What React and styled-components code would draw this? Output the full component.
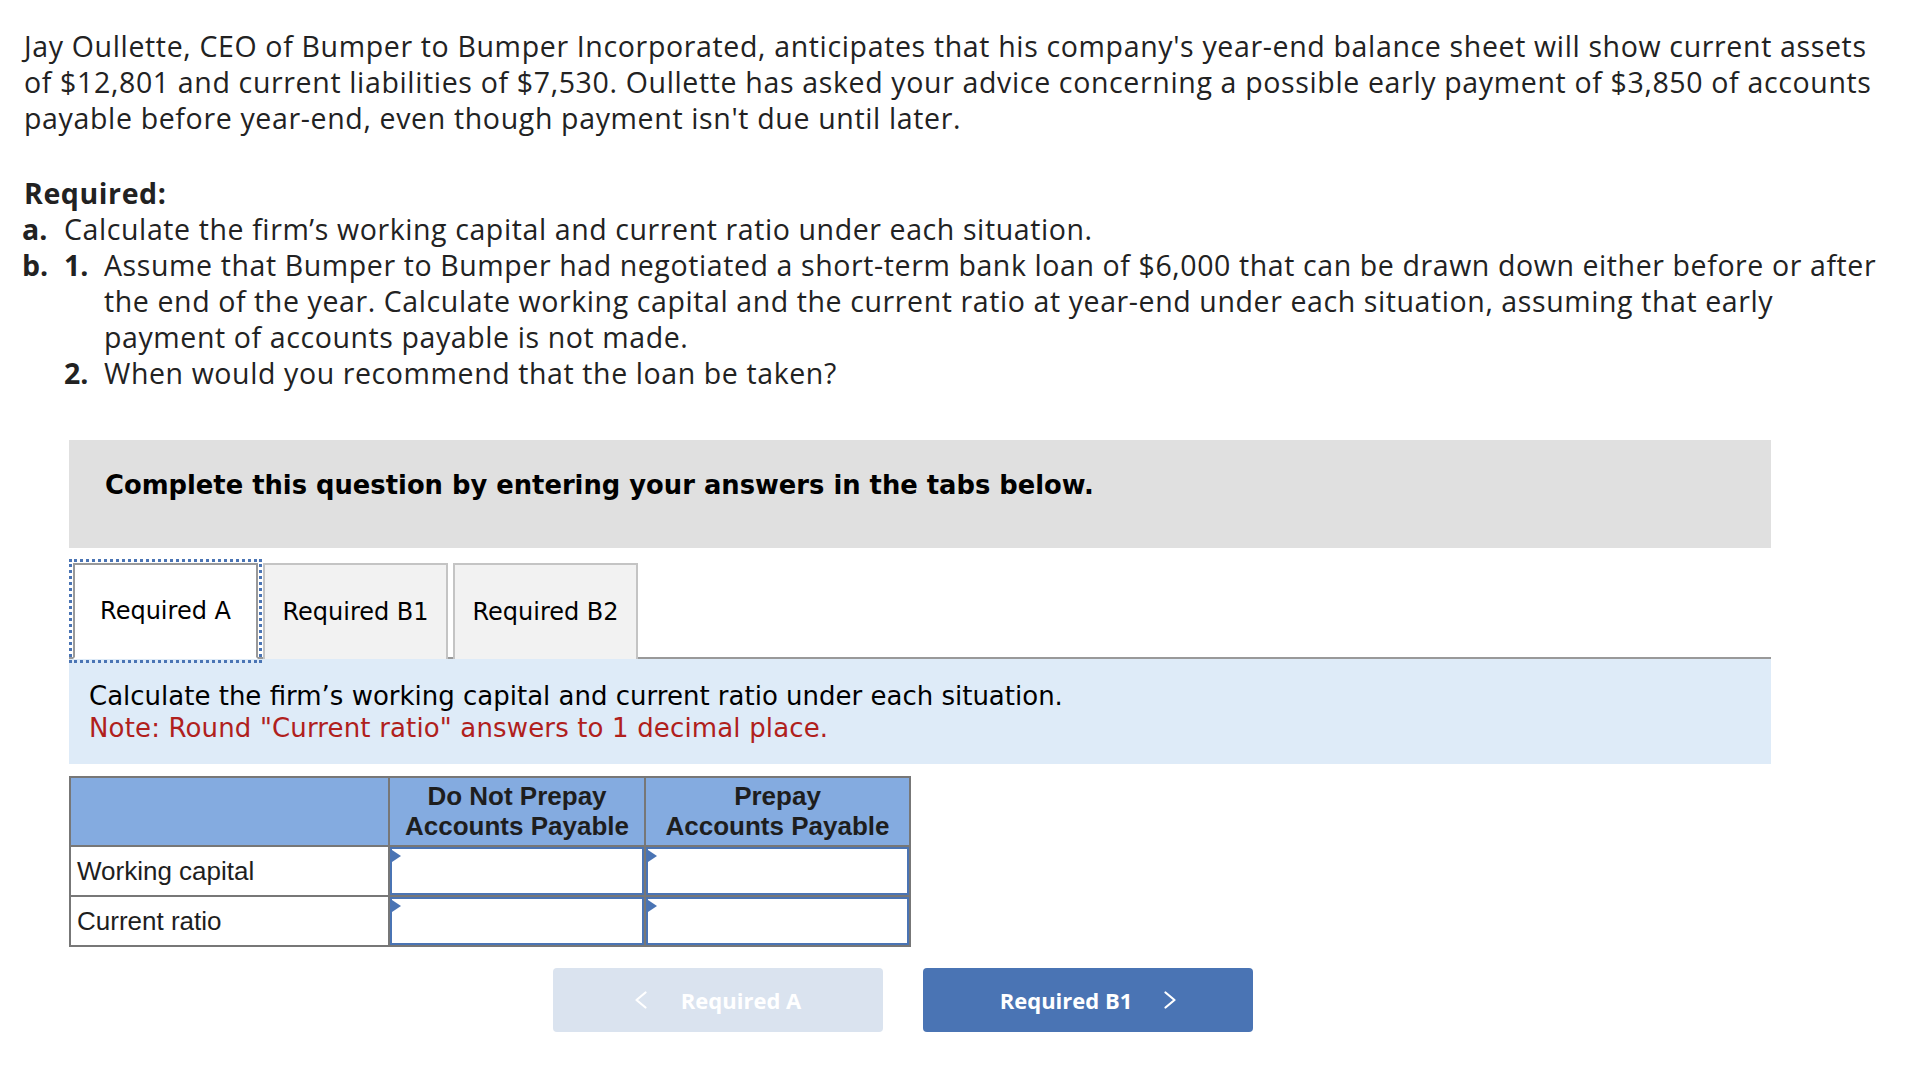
import React from "react";
import styled, { createGlobalStyle } from "styled-components";

const GlobalStyle = createGlobalStyle`
  body {
    margin: 0;
    background: #ffffff;
  }
`;

const situations = ["Do Not Prepay", "Prepay"];
const rows = ["Working capital", "Current ratio"];
const tabs = ["Required A", "Required B1", "Required B2"];

const Chevron = ({ dir }) => (
  <svg width="12" height="18" viewBox="0 0 12 18" fill="none">
    <polyline
      points={dir === "left" ? "10.5,1.5 1.5,9 10.5,16.5" : "1.5,1.5 10.5,9 1.5,16.5"}
      stroke="#ffffff"
      strokeWidth="2.2"
      strokeLinecap="round"
      strokeLinejoin="round"
    />
  </svg>
);

const App = () => {
  return (
    <Page>
      <GlobalStyle />
      <Question>
        Jay Oullette, CEO of Bumper to Bumper Incorporated, anticipates that
        his company's year-end balance sheet will show current assets of
        $12,801 and current liabilities of $7,530. Oullette has asked your
        advice concerning a possible early payment of $3,850 of accounts
        payable before year-end, even though payment isn't due until later.
      </Question>

      <Required>
        <h3>Required:</h3>
        <Item>
          <Label>a.</Label>
          <span>
            Calculate the firm’s working capital and current ratio under each
            situation.
          </span>
        </Item>
        <Item>
          <Label>b.</Label>
          <div>
            <SubItem>
              <Label sub>1.</Label>
              <span>
                Assume that Bumper to Bumper had negotiated a short-term bank
                loan of $6,000 that can be drawn down either before or after
                the end of the year. Calculate working capital and the current
                ratio at year-end under each situation, assuming that early
                payment of accounts payable is not made.
              </span>
            </SubItem>
            <SubItem>
              <Label sub>2.</Label>
              <span>When would you recommend that the loan be taken?</span>
            </SubItem>
          </div>
        </Item>
      </Required>

      <Assignment>
        <Instructions>
          <h4>Complete this question by entering your answers in the tabs below.</h4>
        </Instructions>

        <TabStrip>
          {tabs.map((t, i) => (
            <Tab key={t} active={i === 0}>
              {t}
            </Tab>
          ))}
        </TabStrip>

        <TabPanel>
          <p>
            Calculate the firm’s working capital and current ratio under each
            situation.
          </p>
          <Note>Note: Round "Current ratio" answers to 1 decimal place.</Note>
        </TabPanel>

        <AnswerTable>
          <colgroup>
            <col style={{ width: 319 }} />
            <col style={{ width: 256 }} />
            <col style={{ width: 265 }} />
          </colgroup>
          <thead>
            <tr>
              <th />
              {situations.map((s) => (
                <th key={s}>
                  {s}
                  <br />
                  Accounts Payable
                </th>
              ))}
            </tr>
          </thead>
          <tbody>
            {rows.map((r) => (
              <tr key={r}>
                <RowLabel>{r}</RowLabel>
                {situations.map((s) => (
                  <AnswerCell key={s}>
                    <AnswerBox>
                      <input type="text" aria-label={`${r} ${s}`} />
                    </AnswerBox>
                  </AnswerCell>
                ))}
              </tr>
            ))}
          </tbody>
        </AnswerTable>

        <Nav>
          <NavButton disabled>
            <Chevron dir="left" />
            <span>Required A</span>
          </NavButton>
          <NavButton primary>
            <span>Required B1</span>
            <Chevron dir="right" />
          </NavButton>
        </Nav>
      </Assignment>
    </Page>
  );
};

export default App;

const Page = styled.div`
  padding: 28px 34px 40px 24px;
  font-family: "Open Sans", "Lato", sans-serif;
  color: #222222;
`;

const Question = styled.p`
  margin: 0;
  font-size: 28.5px;
  letter-spacing: 0.65px;
  line-height: 36px;
`;

const Required = styled.div`
  margin-top: 39px;
  font-size: 28.5px;
  letter-spacing: 0.6px;
  line-height: 36px;
  h3 {
    margin: 0;
    font-size: 28.5px;
    font-weight: 700;
  }
`;

const Item = styled.div`
  display: grid;
  grid-template-columns: 40px 1fr;
`;

const SubItem = styled.div`
  display: grid;
  grid-template-columns: 40px 1fr;
`;

const Label = styled.span`
  font-weight: 700;
  letter-spacing: 0;
  text-align: ${(p) => (p.sub ? "right" : "left")};
  padding-right: ${(p) => (p.sub ? "16px" : "0")};
  margin-left: ${(p) => (p.sub ? "0" : "-2px")};
`;

const Assignment = styled.div`
  margin: 49px 115px 0 45px;
  font-family: "DejaVu Sans", Verdana, sans-serif;
`;

const Instructions = styled.div`
  background: #e0e0e0;
  padding: 30px 36px 48px;
  h4 {
    margin: 0;
    font-size: 25.8px;
    line-height: 30px;
    font-weight: 700;
    color: #000000;
  }
`;

const TabStrip = styled.div`
  display: flex;
  gap: 5px;
  margin-top: 15px;
  padding-left: 4px;
  border-bottom: 2px solid #999999;
`;

const Tab = styled.button`
  width: 185px;
  height: 96px;
  margin-bottom: -2px;
  border: 2px solid ${(p) => (p.active ? "#999999" : "#c4c4c4")};
  border-bottom: ${(p) => (p.active ? "2px solid #ffffff" : "none")};
  background: ${(p) => (p.active ? "#ffffff" : "#f2f2f2")};
  outline: ${(p) => (p.active ? "3px dotted #4a74b4" : "none")};
  outline-offset: 1px;
  font-family: "DejaVu Sans", Verdana, sans-serif;
  font-size: 24px;
  color: #000000;
  text-align: center;
  padding: 0;
  cursor: pointer;
`;

const TabPanel = styled.div`
  background: #deebf8;
  padding: 21px 20px 20px;
  font-size: 26px;
  line-height: 32px;
  color: #000000;
  p {
    margin: 0;
  }
`;

const Note = styled.p`
  color: #b0201c;
  letter-spacing: 0.15px;
`;

const AnswerTable = styled.table`
  margin-top: 12px;
  border-collapse: collapse;
  border: 2px solid #777777;
  width: 840px;
  table-layout: fixed;
  font-family: "Liberation Sans", Arial, sans-serif;
  font-size: 26px;
  color: #1e1e1e;
  th {
    background: #84abe0;
    border: 2px solid #777777;
    font-weight: 700;
    line-height: 30px;
    padding: 3px 0 4px;
    text-align: center;
  }
`;

const RowLabel = styled.td`
  border: 2px solid #777777;
  height: 48px;
  padding: 0 6px;
  line-height: 30px;
`;

const AnswerCell = styled.td`
  border: 2px solid #777777;
  padding: 0;
  height: 48px;
`;

const AnswerBox = styled.div`
  position: relative;
  height: 48px;
  border: 2px solid #4a74b4;
  box-sizing: border-box;
  background: #ffffff;
  &::before {
    content: "";
    position: absolute;
    top: 1px;
    left: 0;
    border-top: 6px solid transparent;
    border-bottom: 6px solid transparent;
    border-left: 9px solid #4a74b4;
  }
  input {
    width: 100%;
    height: 100%;
    border: none;
    outline: none;
    background: transparent;
    box-sizing: border-box;
    padding: 0 12px;
    font: inherit;
    text-align: right;
  }
`;

const Nav = styled.div`
  display: flex;
  gap: 40px;
  margin-top: 21px;
  padding-left: 484px;
`;

const NavButton = styled.button`
  display: flex;
  align-items: center;
  justify-content: center;
  gap: ${(p) => (p.primary ? "32px" : "34px")};
  width: 330px;
  height: 64px;
  border: none;
  border-radius: 4px;
  background: ${(p) => (p.primary ? "#4a74b4" : "#dae3ef")};
  color: #ffffff;
  font-family: "Open Sans", "Lato", sans-serif;
  font-size: 22px;
  font-weight: 700;
  cursor: ${(p) => (p.disabled ? "default" : "pointer")};
`;
